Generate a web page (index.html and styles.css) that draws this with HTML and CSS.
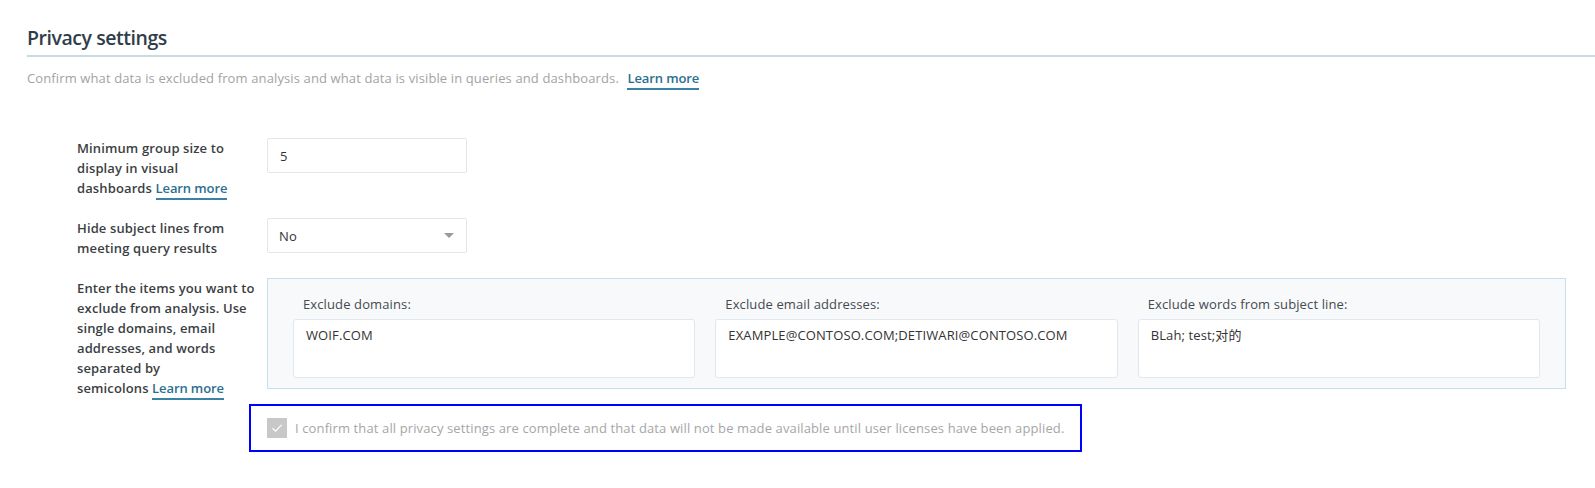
FILE: index.html
```html
<!DOCTYPE html>
<html lang="en">
<head>
<meta charset="utf-8">
<title>Privacy settings</title>
<link rel="stylesheet" href="styles.css">
</head>
<body>
<div class="page">
  <h2 class="title">Privacy settings</h2>
  <p class="intro">Confirm what data is excluded from analysis and what data is visible in queries and dashboards. <a class="link intro-link" href="#">Learn more</a></p>

  <div class="form">
    <div class="row">
      <div class="label">Minimum group size to display in visual <span class="keep">dashboards <a class="link" href="#">Learn more</a></span></div>
      <div class="control">
        <div class="field">5</div>
      </div>
    </div>

    <div class="row">
      <div class="label">Hide subject lines from meeting query results</div>
      <div class="control">
        <div class="field select"><span>No</span><span class="caret"></span></div>
      </div>
    </div>

    <div class="row">
      <div class="label">Enter the items you want to exclude from analysis. Use single domains, email addresses, and words separated by <span class="keep">semicolons <a class="link" href="#">Learn more</a></span></div>
      <div class="control wide">
        <div class="exclude">
          <div class="exclude-col">
            <div class="exclude-label">Exclude domains:</div>
            <div class="textarea">WOIF.COM</div>
          </div>
          <div class="exclude-col">
            <div class="exclude-label">Exclude email addresses:</div>
            <div class="textarea">EXAMPLE@CONTOSO.COM;DETIWARI@CONTOSO.COM</div>
          </div>
          <div class="exclude-col">
            <div class="exclude-label">Exclude words from subject line:</div>
            <div class="textarea">BLah; test;对的</div>
          </div>
        </div>
      </div>
    </div>

    <div class="row confirm-row">
      <div class="label"></div>
      <div class="control">
        <div class="confirm">
          <span class="checkbox"><svg width="12" height="10" viewBox="0 0 12 10"><path d="M1.5 5.2 L4.6 8.2 L10.5 1.8" fill="none" stroke="#ffffff" stroke-width="1.2"/></svg></span>
          <span class="confirm-text">I confirm that all privacy settings are complete and that data will not be made available until user licenses have been applied.</span>
        </div>
      </div>
    </div>
  </div>
</div>
</body>
</html>
```

FILE: styles.css
```css
* { box-sizing: border-box; }

html, body {
  margin: 0;
  padding: 0;
  background: #ffffff;
}

body {
  font-family: "Open Sans", "Noto Sans CJK SC", sans-serif;
  font-size: 13px;
  line-height: 20px;
  letter-spacing: 0.12px;
  color: #333333;
}

.page {
  padding: 24px 0 0 27px;
}

.title {
  margin: 0;
  font-size: 19.5px;
  line-height: 28px;
  letter-spacing: -0.45px;
  font-weight: 600;
  color: #2f3d4a;
  padding-bottom: 3px;
  border-bottom: 2px solid #c6dce2;
}

.intro {
  margin: 11px 0 0 0;
  color: #a3a3a3;
}

.intro-link {
  margin-left: 5px;
}

.link {
  color: #2a6f8f;
  font-weight: 600;
  letter-spacing: -0.1px;
  text-decoration: none;
  border-bottom: 2px solid #3a82a3;
  padding-bottom: 1px;
}

.form {
  display: flex;
  flex-direction: column;
  gap: 20px;
  padding: 50px 29px 0 50px;
}

.row {
  display: grid;
  grid-template-columns: 190px 1fr;
  align-items: start;
}

.label {
  font-weight: 600;
  color: #3b3f44;
  padding-right: 8px;
}

.keep { white-space: nowrap; }

.field {
  width: 200px;
  height: 35px;
  border: 1px solid #e2e7eb;
  border-radius: 2px;
  padding: 0 12px;
  display: flex;
  align-items: center;
  color: #333333;
}

.select {
  justify-content: space-between;
  padding: 0 12px 0 11px;
}

.caret {
  width: 0;
  height: 0;
  border-left: 5px solid transparent;
  border-right: 5px solid transparent;
  border-top: 5px solid #9a9a9a;
}

.exclude {
  border: 1px solid #c3e2ee;
  background: #f8f9fb;
  padding: 15px 25px 10px 25px;
  display: grid;
  grid-template-columns: repeat(3, 1fr);
  gap: 20px;
}

.exclude-label {
  padding-left: 10px;
  margin-bottom: 5px;
  color: #444a50;
}

.textarea {
  height: 59px;
  background: #ffffff;
  border: 1px solid #e0e8ee;
  border-radius: 3px;
  padding: 5px 12px;
  color: #333333;
}

.confirm-row {
  margin-top: -14px;
}

.confirm {
  display: inline-flex;
  align-items: center;
  gap: 8px;
  margin-left: -18px;
  padding: 12px 16px;
  border: 2px solid #0000ff;
}

.checkbox {
  width: 20px;
  height: 20px;
  background: #c8c8c8;
  display: flex;
  align-items: center;
  justify-content: center;
}

.confirm-text {
  color: #a6a6a6;
}
```
